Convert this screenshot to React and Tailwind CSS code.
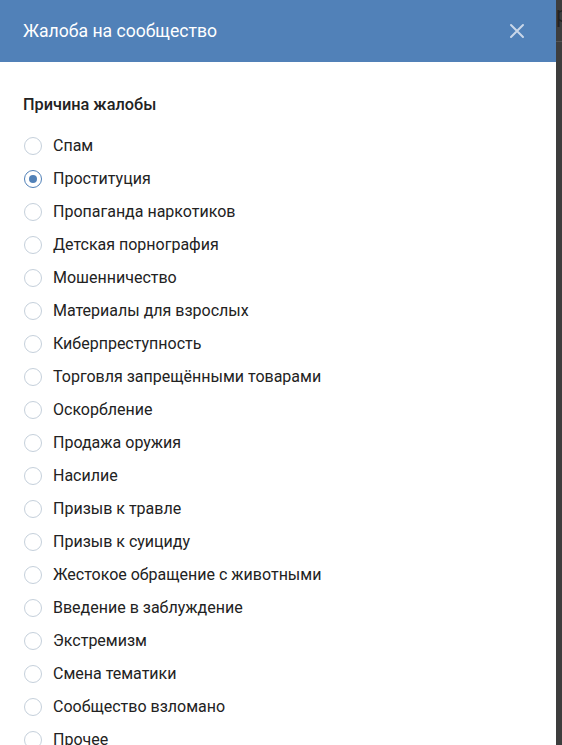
import { useState } from "react";

const reasons = [
  "Спам",
  "Проституция",
  "Пропаганда наркотиков",
  "Детская порнография",
  "Мошенничество",
  "Материалы для взрослых",
  "Киберпреступность",
  "Торговля запрещёнными товарами",
  "Оскорбление",
  "Продажа оружия",
  "Насилие",
  "Призыв к травле",
  "Призыв к суициду",
  "Жестокое обращение с животными",
  "Введение в заблуждение",
  "Экстремизм",
  "Смена тематики",
  "Сообщество взломано",
  "Прочее",
];

const App = () => {
  // selected reason index
  const [selected, setSelected] = useState(1);

  return (
    <div className="flex h-[745px] w-[562px] overflow-hidden bg-[#3d3d3d] font-['Roboto',sans-serif]">
      {/* Modal */}
      <div className="flex w-[556px] shrink-0 flex-col bg-white">
        {/* Header */}
        <div className="flex h-[62px] shrink-0 items-center justify-between bg-[#5181b8] pl-[23px] pr-[31px]">
          <h1 className="text-[17.6px] text-white">Жалоба на сообщество</h1>
          <button className="text-[#c9d7e9]">
            <svg width="16" height="16" viewBox="0 0 16 16">
              <path d="M2 2 L14 14 M14 2 L2 14" stroke="currentColor" strokeWidth="2" strokeLinecap="round" />
            </svg>
          </button>
        </div>

        {/* Body */}
        <div className="px-[23px] pt-[33px]">
          <p className="text-[16.3px] leading-[20px] font-medium text-[#222]">Причина жалобы</p>
          <div className="mt-[14px] flex flex-col">
            {reasons.map((reason, index) => (
              <label
                key={reason}
                className="flex h-[33px] shrink-0 cursor-pointer items-center"
                onClick={() => setSelected(index)}
              >
                <span
                  className={
                    index === selected
                      ? "ml-px flex h-[18px] w-[18px] items-center justify-center rounded-full border border-[#5181b8]"
                      : "ml-px flex h-[18px] w-[18px] items-center justify-center rounded-full border border-[#c5d0db]"
                  }
                >
                  {index === selected && <span className="h-[8px] w-[8px] rounded-full bg-[#5181b8]" />}
                </span>
                <span className="ml-[11px] text-[16px] leading-[20px] text-[#222]">{reason}</span>
              </label>
            ))}
          </div>
        </div>
      </div>

      {/* Page behind the modal */}
      <div className="flex-1 pt-[4px]">
        <div className="h-[38px] border-b border-[#555] text-[22px] leading-none text-[#222]">p</div>
      </div>
    </div>
  );
};

export default App;
